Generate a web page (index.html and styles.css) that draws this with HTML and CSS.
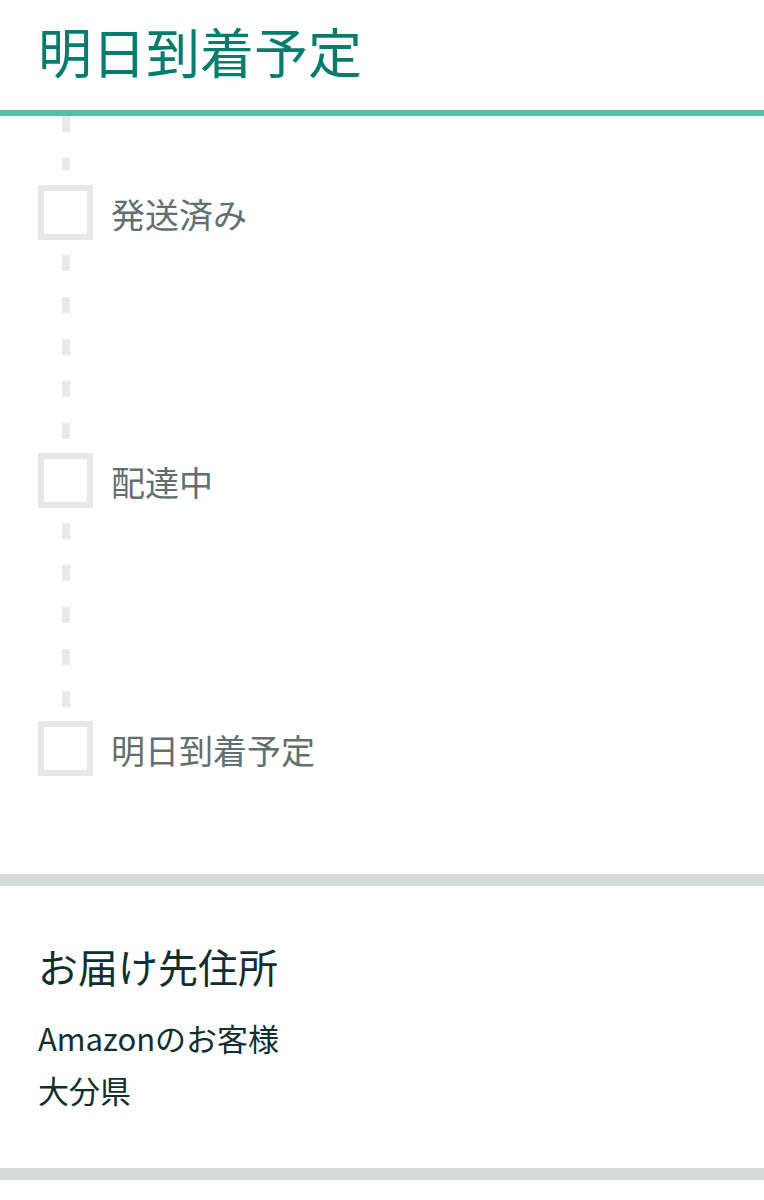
FILE: index.html
```html
<!DOCTYPE html>
<html lang="ja">
<head>
<meta charset="utf-8">
<title>明日到着予定</title>
<link rel="stylesheet" href="styles.css">
</head>
<body>
<header class="status-header">
  <h1 class="status-title">明日到着予定</h1>
</header>
<section class="timeline">
  <div class="connector connector-top"></div>
  <div class="step">
    <span class="step-box"></span>
    <span class="step-label">発送済み</span>
  </div>
  <div class="connector"></div>
  <div class="step">
    <span class="step-box"></span>
    <span class="step-label">配達中</span>
  </div>
  <div class="connector"></div>
  <div class="step">
    <span class="step-box"></span>
    <span class="step-label">明日到着予定</span>
  </div>
</section>
<div class="divider"></div>
<section class="address">
  <h2 class="address-title">お届け先住所</h2>
  <p class="address-line">Amazonのお客様</p>
  <p class="address-line">大分県</p>
</section>
<div class="divider"></div>
</body>
</html>
```

FILE: styles.css
```css
html, body {
  margin: 0;
  padding: 0;
  background: #ffffff;
}

body {
  font-family: "Noto Sans CJK JP", "Noto Sans", sans-serif;
}

.status-header {
  height: 110px;
  border-bottom: 6px solid #56bcac;
  display: flex;
  align-items: center;
  padding-left: 38px;
  box-sizing: content-box;
}

.status-title {
  margin: 0;
  font-size: 54px;
  font-weight: 400;
  line-height: 1;
  color: #067d6c;
  position: relative;
  top: -4px;
}

.timeline {
  display: flex;
  flex-direction: column;
  padding-bottom: 98px;
}

.connector {
  width: 8px;
  height: 213px;
  margin-left: 62px;
  background: repeating-linear-gradient(to bottom,
    transparent 0, transparent 15px,
    #e8e8e8 15px, #e8e8e8 31px,
    transparent 31px, transparent 42px);
}

.connector-top {
  height: 69px;
  background-position: 0 -15px;
}

.step {
  display: flex;
  align-items: center;
  height: 55px;
  padding-left: 38px;
}

.step-box {
  width: 55px;
  height: 55px;
  box-sizing: border-box;
  border: 6px solid #e7e7e7;
  background: #ffffff;
  flex: none;
}

.step-label {
  margin-left: 18px;
  font-size: 34px;
  line-height: 1;
  color: #626f6f;
  position: relative;
  top: 1px;
}

.divider {
  height: 12px;
  background: #d5dbdb;
}

.address {
  padding: 56px 38px 52px;
  color: #0f2f30;
}

.address-title {
  margin: 0 0 22px;
  font-size: 40px;
  font-weight: 400;
  line-height: 1.2;
}

.address-line {
  margin: 0;
  font-size: 31px;
  line-height: 52px;
}
```
